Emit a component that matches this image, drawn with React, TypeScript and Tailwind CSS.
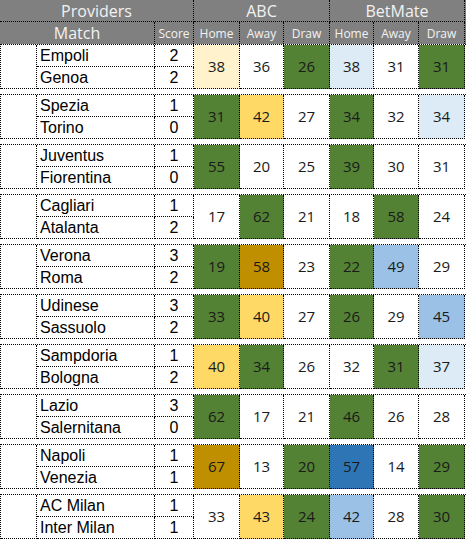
import React from 'react';

type Fill = '' | 'cream' | 'green' | 'lblue' | 'yellow' | 'gold' | 'mblue' | 'blue';
type Odd = [number, Fill];

interface Fixture {
    home: string;
    away: string;
    homeScore: number;
    awayScore: number;
    odds: Odd[];
}

const FIXTURES: Fixture[] = [
    { home: 'Empoli', away: 'Genoa', homeScore: 2, awayScore: 2, odds: [[38, 'cream'], [36, ''], [26, 'green'], [38, 'lblue'], [31, ''], [31, 'green']] },
    { home: 'Spezia', away: 'Torino', homeScore: 1, awayScore: 0, odds: [[31, 'green'], [42, 'yellow'], [27, ''], [34, 'green'], [32, ''], [34, 'lblue']] },
    { home: 'Juventus', away: 'Fiorentina', homeScore: 1, awayScore: 0, odds: [[55, 'green'], [20, ''], [25, ''], [39, 'green'], [30, ''], [31, '']] },
    { home: 'Cagliari', away: 'Atalanta', homeScore: 1, awayScore: 2, odds: [[17, ''], [62, 'green'], [21, ''], [18, ''], [58, 'green'], [24, '']] },
    { home: 'Verona', away: 'Roma', homeScore: 3, awayScore: 2, odds: [[19, 'green'], [58, 'gold'], [23, ''], [22, 'green'], [49, 'mblue'], [29, '']] },
    { home: 'Udinese', away: 'Sassuolo', homeScore: 3, awayScore: 2, odds: [[33, 'green'], [40, 'yellow'], [27, ''], [26, 'green'], [29, ''], [45, 'mblue']] },
    { home: 'Sampdoria', away: 'Bologna', homeScore: 1, awayScore: 2, odds: [[40, 'yellow'], [34, 'green'], [26, ''], [32, ''], [31, 'green'], [37, 'lblue']] },
    { home: 'Lazio', away: 'Salernitana', homeScore: 3, awayScore: 0, odds: [[62, 'green'], [17, ''], [21, ''], [46, 'green'], [26, ''], [28, '']] },
    { home: 'Napoli', away: 'Venezia', homeScore: 1, awayScore: 1, odds: [[67, 'gold'], [13, ''], [20, 'green'], [57, 'blue'], [14, ''], [29, 'green']] },
    { home: 'AC Milan', away: 'Inter Milan', homeScore: 1, awayScore: 1, odds: [[33, ''], [43, 'yellow'], [24, 'green'], [42, 'mblue'], [28, ''], [30, 'green']] },
];

const FILL: Record<Fill, string> = {
    '': 'bg-white',
    cream: 'bg-[#fff2cc]',
    green: 'bg-[#548235]',
    lblue: 'bg-[#ddebf7]',
    yellow: 'bg-[#ffd966]',
    gold: 'bg-[#bf8f00]',
    mblue: 'bg-[#9bc2e6]',
    blue: 'bg-[#2e75b6]',
};

const COLS = 'grid grid-cols-[36px_118px_39px_46px_44px_46px_44px_45px_46px]';
const cell = 'border-r border-b border-dotted border-black';
const uiFont = "font-['Open_Sans',sans-serif]";
const nameFont = "font-['Liberation_Sans',Arial,sans-serif]";

const App: React.FC = () => {
    return (
        <div className="w-[466px] bg-white">
            {/* Header */}
            <div className={`grid grid-cols-[37px_118px_39px_46px_44px_46px_44px_45px_46px] bg-[#808080] text-[#f2f2f2] ${uiFont}`}>
                <div className={`col-span-3 h-[22px] ${cell} flex items-center justify-center text-[16px]`}>Providers</div>
                <div className={`col-span-3 h-[22px] ${cell} flex items-center justify-center text-[16px]`}>ABC</div>
                <div className={`col-span-3 h-[22px] ${cell} flex items-center justify-center text-[16px]`}>BetMate</div>
                <div className="col-span-2 h-[22px] border-r border-dotted border-black flex items-center justify-center text-[16px]">Match</div>
                {['Score', 'Home', 'Away', 'Draw', 'Home', 'Away', 'Draw'].map((h, i) => (
                    <div key={i} className="h-[22px] border-r border-dotted border-black flex items-center justify-center text-[12px] pt-[2px]">{h}</div>
                ))}
            </div>

            {/* Fixtures */}
            <div className="flex flex-col gap-[5px]">
                {FIXTURES.map(f => (
                    <div key={f.home} className={`${COLS} grid-rows-[22px_22px] border-l border-t border-dotted border-black`}>
                        <div className={`row-span-2 ${cell}`}></div>
                        <div className={`${cell} ${nameFont} text-[16px] text-black pl-[3px] flex items-center`}>{f.home}</div>
                        <div className={`${cell} ${nameFont} text-[16px] text-black flex items-center justify-center`}>{f.homeScore}</div>
                        {f.odds.map(([n, c], i) => (
                            <div
                                key={i}
                                className={`row-span-2 ${cell} ${FILL[c]} ${uiFont} text-[15px] text-[#1a1a1a] flex items-center justify-center`}
                            >
                                {n}
                            </div>
                        ))}
                        <div className={`${cell} ${nameFont} text-[16px] text-black pl-[3px] flex items-center`}>{f.away}</div>
                        <div className={`${cell} ${nameFont} text-[16px] text-black flex items-center justify-center`}>{f.awayScore}</div>
                    </div>
                ))}
            </div>
        </div>
    );
};

export default App;
